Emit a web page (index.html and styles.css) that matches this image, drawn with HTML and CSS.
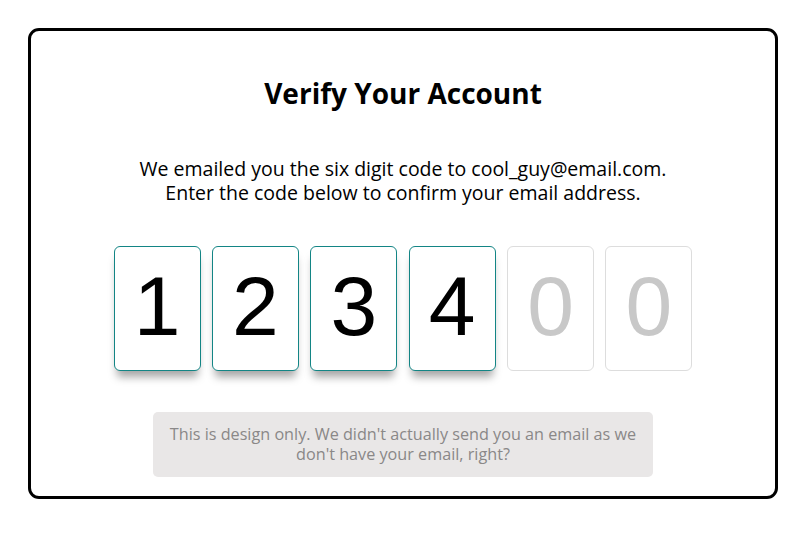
FILE: index.html
```html
<!DOCTYPE html>
<html>
<head>
<meta charset="utf-8">
<link rel="stylesheet" href="styles.css">
</head>
<body>
<div class="card">
  <h1 class="title">Verify Your Account</h1>
  <p class="lead">We emailed you the six digit code to cool_guy@email.com.<br>Enter the code below to confirm your email address.</p>
  <div class="code">
    <div class="digit filled">1</div>
    <div class="digit filled">2</div>
    <div class="digit filled">3</div>
    <div class="digit filled">4</div>
    <div class="digit empty">0</div>
    <div class="digit empty">0</div>
  </div>
  <div class="note">This is design only. We didn't actually send you an email as we don't have your email, right?</div>
</div>
</body>
</html>
```
FILE: styles.css
```css
html, body { margin: 0; padding: 0; background: #fff; }
body { padding: 28px 0 0 28px; font-family: "Open Sans", "DejaVu Sans", sans-serif; color: #000; }
.card {
  box-sizing: border-box;
  width: 750px;
  height: 471px;
  border: 3px solid #000;
  border-radius: 11px;
  display: flex;
  flex-direction: column;
  align-items: center;
}
.title {
  margin: 44px 0 0;
  font-size: 28px;
  line-height: 36px;
  font-weight: 700;
}
.lead {
  margin: 46px 0 0;
  font-size: 19.5px;
  line-height: 24px;
  text-align: center;
}
.code {
  margin-top: 41px;
  display: flex;
  gap: 11.4px;
}
.digit {
  box-sizing: border-box;
  width: 87px;
  height: 125px;
  border-radius: 6px;
  display: flex;
  align-items: center;
  justify-content: center;
  font-family: "Liberation Sans", Arial, sans-serif;
  font-size: 84px;
  padding-bottom: 4px;
  background: #fff;
}
.digit.filled {
  border: 1px solid #138585;
  color: #000;
  box-shadow: 0 9px 9px -3px rgba(0,0,0,0.35);
}
.digit.empty {
  border: 1px solid #ddd;
  color: #c8c8c8;
}
.note {
  box-sizing: border-box;
  margin-top: 41px;
  width: 500px;
  height: 65px;
  padding: 12px 16px 0;
  background: #e9e7e7;
  border-radius: 5px;
  color: #8a8888;
  font-size: 16.2px;
  line-height: 20px;
  text-align: center;
}
```
